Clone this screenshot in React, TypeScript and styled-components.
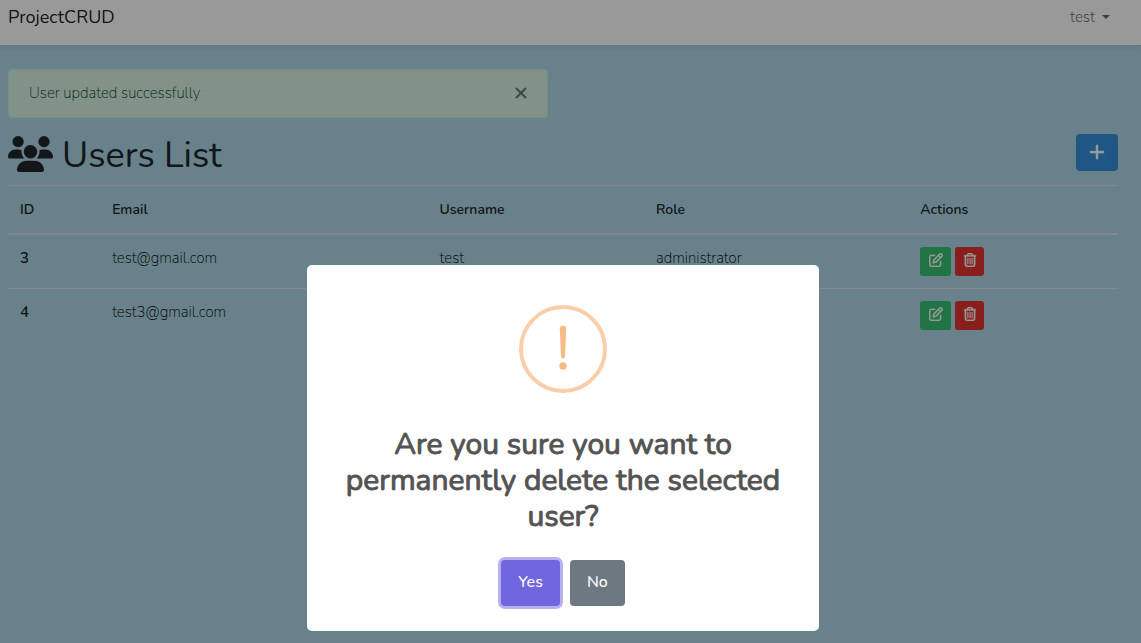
import React from "react";
import styled, { createGlobalStyle } from "styled-components";
import { FaUsers, FaPlus, FaRegPenToSquare, FaRegTrashCan } from "react-icons/fa6";

const GlobalStyle = createGlobalStyle`
  *, *::before, *::after { box-sizing: border-box; }
  body {
    margin: 0;
    background: #add8e6;
    color: #212529;
    font-family: Nunito, "Open Sans", "Noto Sans", sans-serif;
    font-size: 15px;
    font-weight: 250;
    line-height: 23px;
  }
  button { font-family: inherit; cursor: pointer; }
`;

const Navbar = styled.nav`
  display: flex;
  align-items: center;
  justify-content: space-between;
  padding: 4px 31px 14px 8px;
  background: #fff;
  box-shadow: 0 2px 4px rgba(0, 0, 0, 0.08);
`;

const Brand = styled.a`
  color: rgba(0, 0, 0, 0.9);
  font-size: 18px;
  font-weight: 400;
  line-height: 27px;
  text-decoration: none;
`;

const UserMenu = styled.button`
  display: flex;
  align-items: center;
  gap: 7px;
  padding: 0;
  border: 0;
  background: none;
  color: rgba(0, 0, 0, 0.6);
  font-size: 15px;
  font-weight: 300;
  line-height: 23px;

  &::after {
    content: "";
    margin-bottom: 2px;
    border: 4px solid transparent;
    border-top-color: currentColor;
    border-bottom: 0;
  }
`;

const Main = styled.main`
  padding: 24px 23px 24px 8px;
`;

const Alert = styled.div`
  display: flex;
  align-items: center;
  justify-content: space-between;
  width: calc(50% - 15px);
  padding: 12px 20px;
  border: 1px solid #c7eed8;
  border-radius: 4px;
  background: #d7f3e3;
  color: #0c4024;
`;

const CloseButton = styled.button`
  display: flex;
  padding: 0 0 1px;
  border: 0;
  background: none;
  color: #000;
  opacity: 0.5;
`;

const TitleBar = styled.div`
  display: flex;
  align-items: flex-start;
  justify-content: space-between;
  margin: 16px 0 8px;
`;

const Title = styled.h1`
  margin: 0;
  font-size: 36px;
  font-weight: 400;
  line-height: 43px;
`;

const UsersIcon = styled(FaUsers)`
  width: 45px;
  height: 36px;
  margin-right: 9px;
  vertical-align: -5px;
`;

const AddButton = styled.button`
  display: flex;
  align-items: center;
  justify-content: center;
  width: 42px;
  height: 37px;
  padding: 0 0 2px;
  border: 0;
  border-radius: 4px;
  background: #3490dc;
  color: #fff;

  svg { stroke-width: 6px; }
`;

const Table = styled.table`
  width: 100%;
  table-layout: fixed;
  border-collapse: separate;
  border-spacing: 0;
`;

const HeadCell = styled.th<{ $width?: string }>`
  width: ${(p) => p.$width ?? "auto"};
  padding: 12px;
  border-top: 1px solid #dee2e6;
  border-bottom: 2px solid #dee2e6;
  font-size: 14px;
  font-weight: 600;
  text-align: left;
`;

const Row = styled.tr`
  & + & > * { border-top: 1px solid #dee2e6; }
`;

const IdCell = styled.th`
  padding: 12px;
  font-weight: 600;
  text-align: left;
  vertical-align: top;
`;

const Cell = styled.td`
  padding: 12px;
  color: #000;
  vertical-align: top;
`;

const Actions = styled.div`
  display: flex;
  gap: 4px;
`;

const ActionButton = styled.button<{ $danger?: boolean }>`
  display: flex;
  align-items: center;
  justify-content: center;
  width: ${(p) => (p.$danger ? 29 : 31)}px;
  height: 29px;
  padding: 0 0 3px;
  border: 0;
  border-radius: 3px;
  background: ${(p) => (p.$danger ? "#e3342f" : "#38c172")};
  color: #fff;

  svg { stroke-width: 10px; }
`;

const Backdrop = styled.div`
  position: fixed;
  inset: 0;
  display: flex;
  align-items: flex-end;
  justify-content: center;
  padding: 12px 15px 12px 0;
  background: rgba(0, 0, 0, 0.4);
`;

const Dialog = styled.div`
  display: flex;
  flex-direction: column;
  align-items: center;
  width: 100%;
  max-width: 512px;
  padding: 40px 16px 25px;
  border-radius: 5px;
  background: #fff;
`;

const DialogTitle = styled.h2`
  margin: 34px 0 25px;
  padding: 0 14px;
  color: #545454;
  font-size: 30px;
  font-weight: 400;
  line-height: 36px;
  text-align: center;
  -webkit-text-stroke: 1px currentColor;
`;

const DialogActions = styled.div`
  display: flex;
  gap: 10px;
`;

const DialogButton = styled.button<{ $primary?: boolean }>`
  height: 46px;
  padding: 0 17px 2px;
  border: 0;
  border-radius: 4px;
  background: ${(p) => (p.$primary ? "#7066e0" : "#6e7881")};
  box-shadow: ${(p) => (p.$primary ? "0 0 0 3px rgba(112, 102, 224, 0.5)" : "none")};
  color: #fff;
  font-size: 16px;
  font-weight: 500;
  line-height: 24px;
`;

const users = [
  { id: 3, email: "test@gmail.com", username: "test", role: "administrator" },
  { id: 4, email: "test3@gmail.com", username: "test3", role: "client" },
];

function WarningIcon() {
  return (
    <svg width="88" height="88" viewBox="0 0 88 88" aria-hidden="true">
      <circle cx="44" cy="44" r="42" fill="none" stroke="#facea8" strokeWidth="4" />
      <path d="M40.8 24a3.2 3.2 0 0 1 6.4 0L46 51.500a2 2 0 0 1-4 0Z" fill="#f8bb86" />
      <circle cx="44" cy="61" r="3.700" fill="#f8bb86" />
    </svg>
  );
}

export default function App() {
  return (
    <>
      <GlobalStyle />
      <Navbar>
        <Brand href="#">ProjectCRUD</Brand>
        <UserMenu type="button">test</UserMenu>
      </Navbar>
      <Main>
        <Alert role="alert">
          User updated successfully
          <CloseButton type="button" aria-label="Close">
            <svg width="12" height="12" viewBox="0 0 12 12" stroke="currentColor" strokeWidth="2" strokeLinecap="round">
              <path d="M1.500 1.500l9 9M10.500 1.500l-9 9" />
            </svg>
          </CloseButton>
        </Alert>
        <TitleBar>
          <Title>
            <UsersIcon />
            Users List
          </Title>
          <AddButton type="button" aria-label="Add user">
            <FaPlus size={18} />
          </AddButton>
        </TitleBar>
        <Table>
          <thead>
            <tr>
              <HeadCell scope="col" $width="8.3%">ID</HeadCell>
              <HeadCell scope="col" $width="29.5%">Email</HeadCell>
              <HeadCell scope="col" $width="19.5%">Username</HeadCell>
              <HeadCell scope="col" $width="23.8%">Role</HeadCell>
              <HeadCell scope="col">Actions</HeadCell>
            </tr>
          </thead>
          <tbody>
            {users.map((user) => (
              <Row key={user.id}>
                <IdCell scope="row">{user.id}</IdCell>
                <Cell>{user.email}</Cell>
                <Cell>{user.username}</Cell>
                <Cell>{user.role}</Cell>
                <Cell>
                  <Actions>
                    <ActionButton type="button" aria-label="Edit user">
                      <FaRegPenToSquare size={14} />
                    </ActionButton>
                    <ActionButton type="button" $danger aria-label="Delete user">
                      <FaRegTrashCan size={14} />
                    </ActionButton>
                  </Actions>
                </Cell>
              </Row>
            ))}
          </tbody>
        </Table>
      </Main>
      <Backdrop>
        <Dialog role="dialog" aria-modal="true" aria-labelledby="dialog-title">
          <WarningIcon />
          <DialogTitle id="dialog-title">
            Are you sure you want to permanently delete the selected user?
          </DialogTitle>
          <DialogActions>
            <DialogButton type="button" $primary>Yes</DialogButton>
            <DialogButton type="button">No</DialogButton>
          </DialogActions>
        </Dialog>
      </Backdrop>
    </>
  );
}
